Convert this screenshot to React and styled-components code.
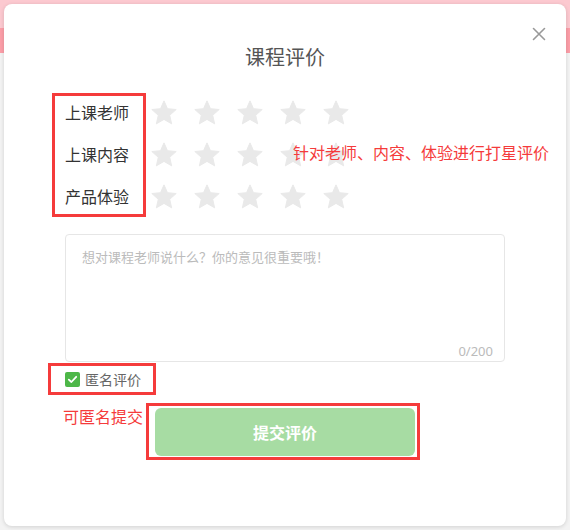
import React from "react";
import styled, { createGlobalStyle } from "styled-components";

const GlobalStyle = createGlobalStyle`
  html, body {
    margin: 0;
    padding: 0;
  }
  body {
    width: 570px;
    height: 530px;
    overflow: hidden;
    font-family: "Noto Sans CJK SC", "Noto Sans", sans-serif;
    background: linear-gradient(
      to bottom,
      #fcc9d0 0px,
      #fcc9d0 28px,
      #fc9ea8 28px,
      #fc9ea8 53px,
      #f3f3f3 53px
    );
  }
`;

const Modal = styled.div`
  position: relative;
  box-sizing: border-box;
  margin: 4px;
  width: 562px;
  height: 522px;
  background: #fff;
  border-radius: 8px;
  box-shadow: 0 1px 4px rgba(0, 0, 0, 0.14);
  padding: 39px 48px 0;
  display: flex;
  flex-direction: column;
`;

const CloseButton = styled.button`
  position: absolute;
  top: 23px;
  right: 20px;
  width: 14px;
  height: 14px;
  padding: 0;
  border: none;
  background: none;
  cursor: pointer;
  color: #999;
`;

const Title = styled.h2`
  margin: 0;
  font-size: 20px;
  font-weight: normal;
  line-height: 28px;
  color: #555;
  text-align: center;
`;

const RatingSection = styled.div`
  position: relative;
  margin-top: 22px;
  display: flex;
  align-items: center;
`;

const MarkBox = styled.div`
  box-sizing: border-box;
  border: 3px solid #f53b3b;
`;

const LabelColumn = styled(MarkBox)`
  padding: 0 14px 0 10px;
  display: flex;
  flex-direction: column;
  gap: 8px;
`;

const Label = styled.div`
  font-size: 16px;
  line-height: 34px;
  color: #333;
  transform: translateY(-1px);
`;

const StarColumn = styled.div`
  margin-left: 5px;
  display: flex;
  flex-direction: column;
  gap: 8px;
`;

const StarRow = styled.div`
  height: 34px;
  display: flex;
  align-items: center;
  gap: 17px;
`;

const StarIcon = styled.svg`
  width: 26px;
  height: 26px;
  display: block;
  color: #e9e9e9;
`;

const Note = styled.span`
  font-size: 16px;
  line-height: 20px;
  color: #f53b3b;
  white-space: nowrap;
`;

const RatingNote = styled(Note)`
  position: absolute;
  left: 241px;
  top: 49px;
`;

const TextBox = styled.div`
  margin: 17px 13px 0;
  height: 128px;
  box-sizing: border-box;
  border: 1px solid #e6e6e6;
  border-radius: 4px;
  display: flex;
  flex-direction: column;
`;

const Comment = styled.textarea`
  flex: 1;
  border: none;
  resize: none;
  outline: none;
  background: transparent;
  padding: 13px 16px 0;
  font-family: inherit;
  font-size: 13px;
  line-height: 18px;
  color: #333;

  &::placeholder {
    color: #bbb;
  }
`;

const Counter = styled.div`
  text-align: right;
  padding: 0 11px 1px;
  font-family: "Noto Sans", sans-serif;
  font-size: 13px;
  line-height: 18px;
  color: #bbb;
`;

const AnonBox = styled(MarkBox)`
  align-self: flex-start;
  margin: 1px 0 0 -4px;
  height: 32px;
  padding: 0 12px 0 14px;
  display: flex;
  align-items: center;
  gap: 5px;
  cursor: pointer;
`;

const CheckMark = styled.span`
  width: 15px;
  height: 15px;
  border-radius: 2px;
  background: #4db748;
  display: flex;
  align-items: center;
  justify-content: center;
`;

const AnonText = styled.span`
  font-size: 14px;
  line-height: 20px;
  color: #666;
`;

const SubmitRow = styled.div`
  margin-top: 8px;
  display: flex;
  justify-content: center;
`;

const SubmitBox = styled(MarkBox)`
  position: relative;
  margin-left: -4px;
  padding: 2px 2px 1px 6px;
`;

const SubmitNote = styled(Note)`
  position: absolute;
  right: calc(100% + 6px);
  top: 0;
`;

const SubmitButton = styled.button`
  width: 260px;
  height: 48px;
  border: none;
  border-radius: 6px;
  background: #a7dca3;
  color: #fff;
  font-family: inherit;
  font-size: 16px;
  font-weight: bold;
  cursor: not-allowed;
`;

const Star = () => (
  <StarIcon viewBox="0 0 26 26">
    <polygon
      points="13,0.8 16.5,8.7 25.2,9.5 18.7,15.3 20.6,23.8 13,19.4 5.4,23.8 7.3,15.3 0.8,9.5 9.5,8.7"
      fill="currentColor"
      stroke="currentColor"
      strokeWidth="1"
      strokeLinejoin="round"
    />
  </StarIcon>
);

const items = ["上课老师", "上课内容", "产品体验"];

export default function App() {
  return (
    <>
      <GlobalStyle />
      <Modal>
        <CloseButton aria-label="关闭">
          <svg width="14" height="14" viewBox="0 0 14 14">
            <path
              d="M1.5 1.5 L12.5 12.5 M12.5 1.5 L1.5 12.5"
              stroke="currentColor"
              strokeWidth="1.6"
              strokeLinecap="round"
            />
          </svg>
        </CloseButton>
        <Title>课程评价</Title>

        <RatingSection>
          <LabelColumn>
            {items.map((t) => (
              <Label key={t}>{t}</Label>
            ))}
          </LabelColumn>
          <StarColumn>
            {items.map((t) => (
              <StarRow key={t}>
                {[0, 1, 2, 3, 4].map((i) => (
                  <Star key={i} />
                ))}
              </StarRow>
            ))}
          </StarColumn>
          <RatingNote>针对老师、内容、体验进行打星评价</RatingNote>
        </RatingSection>

        <TextBox>
          <Comment placeholder="想对课程老师说什么？你的意见很重要哦！" />
          <Counter>0/200</Counter>
        </TextBox>

        <AnonBox>
          <CheckMark>
            <svg width="11" height="11" viewBox="0 0 11 11">
              <path
                d="M1.8 5.6 L4.4 8 L9.2 2.8"
                fill="none"
                stroke="#fff"
                strokeWidth="1.8"
                strokeLinecap="round"
                strokeLinejoin="round"
              />
            </svg>
          </CheckMark>
          <AnonText>匿名评价</AnonText>
        </AnonBox>

        <SubmitRow>
          <SubmitBox>
            <SubmitNote>可匿名提交</SubmitNote>
            <SubmitButton>提交评价</SubmitButton>
          </SubmitBox>
        </SubmitRow>
      </Modal>
    </>
  );
}
